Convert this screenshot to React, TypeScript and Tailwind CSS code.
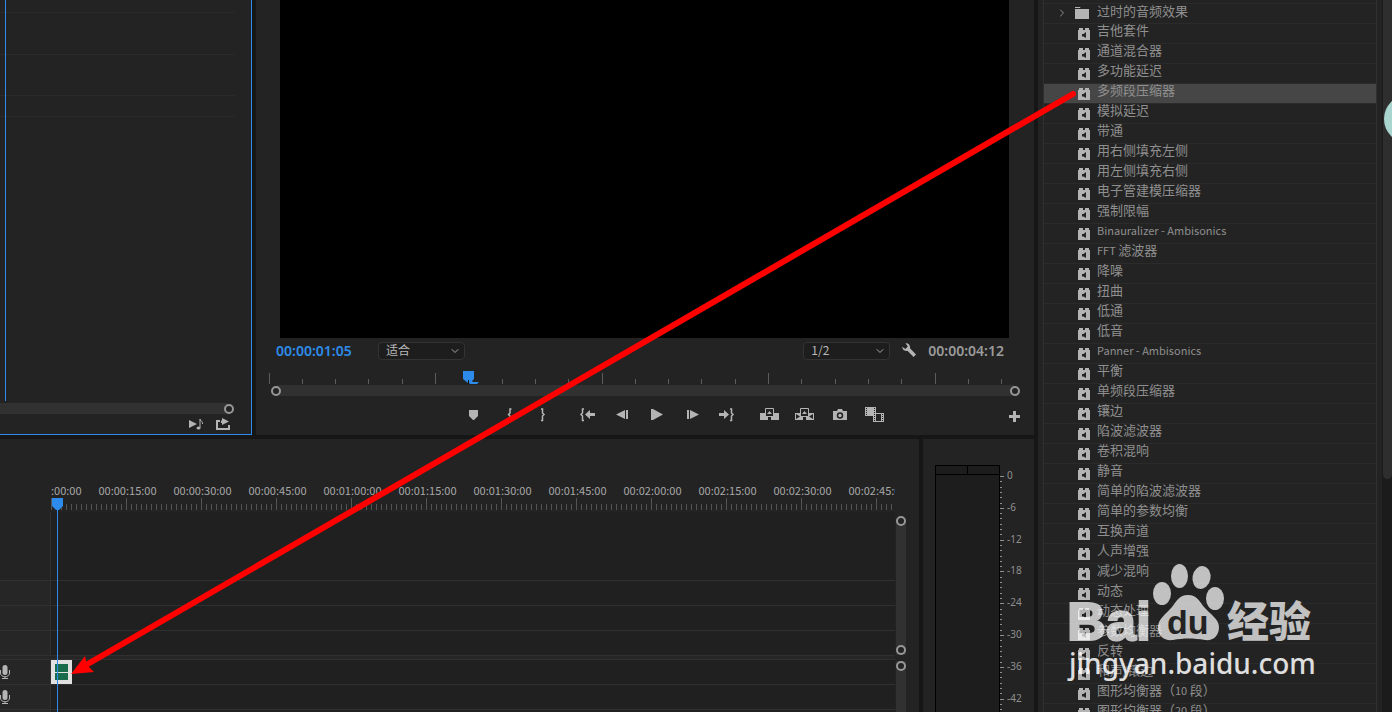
import type { ReactNode } from 'react';
import { ChevronDown, ChevronRight } from 'lucide-react';

const EFFECTS = [
  '吉他套件',
  '通道混合器',
  '多功能延迟',
  '多频段压缩器',
  '模拟延迟',
  '带通',
  '用右侧填充左侧',
  '用左侧填充右侧',
  '电子管建模压缩器',
  '强制限幅',
  'Binauralizer - Ambisonics',
  'FFT 滤波器',
  '降噪',
  '扭曲',
  '低通',
  '低音',
  'Panner - Ambisonics',
  '平衡',
  '单频段压缩器',
  '镶边',
  '陷波滤波器',
  '卷积混响',
  '静音',
  '简单的陷波滤波器',
  '简单的参数均衡',
  '互换声道',
  '人声增强',
  '减少混响',
  '动态',
  '动态处理',
  '参数均衡器',
  '反转',
  '和声/镶边',
  '图形均衡器（10 段）',
  '图形均衡器（20 段）',
];

const SELECTED = '多频段压缩器';

const RULER = [
  '00:00:00:00',
  '00:00:15:00',
  '00:00:30:00',
  '00:00:45:00',
  '00:01:00:00',
  '00:01:15:00',
  '00:01:30:00',
  '00:01:45:00',
  '00:02:00:00',
  '00:02:15:00',
  '00:02:30:00',
  '00:02:45:00',
];

const DB_MARKS = ['0', '-6', '-12', '-18', '-24', '-30', '-36', '-42'];

// Latin runs are set smaller than the Chinese text around them
function EffectName({ name }: { name: string }) {
  return (
    <span className="whitespace-nowrap text-[13px] leading-[13px]">
      {name.split(/([A-Za-z0-9/ -]+)/).map((part, i) =>
        i % 2 === 1 ? (
          <span key={i} className="font-['Noto_Sans_CJK_SC',sans-serif] text-[11px]">{part}</span>
        ) : (
          part
        )
      )}
    </span>
  );
}

function EffectIcon() {
  return (
    <svg width="12" height="12" viewBox="0 0 12 12" className="mt-1 shrink-0">
      <path d="M0 2h1V0h4v2h2V0h4v2h1v10H0z" fill="#b4b4b4" />
      <path d="M4 6h1.500L8 4v6L5.500 8.500H4z" fill="#232323" />
    </svg>
  );
}

function Knob({ className = '' }: { className?: string }) {
  return (
    <span className={`relative block size-[10px] shrink-0 rounded-full border-2 border-[#979797] bg-[#232323] ${className}`} />
  );
}

function IconButton({ label, className = '', children }: { label: string; className?: string; children: ReactNode }) {
  return (
    <button type="button" aria-label={label} className={`flex h-4 w-[35px] shrink-0 items-center justify-center text-[#b4b4b4] ${className}`}>
      <svg width="20" height="16" viewBox="0 0 20 16" fill="currentColor">
        {children}
      </svg>
    </button>
  );
}

function Dropdown({ label, value }: { label: string; value: string }) {
  return (
    <label className="relative block w-[87px] shrink-0">
      <span className="sr-only">{label}</span>
      <select className="block h-[18px] w-full appearance-none rounded-sm border border-[#333] bg-[#1d1d1d] pb-[2px] pl-[7px] font-['Noto_Sans_CJK_SC',sans-serif] text-[12px] leading-[14px] text-[#b8b8b8]">
        <option>{value}</option>
      </select>
      <ChevronDown className="pointer-events-none absolute top-[3px] right-1 size-3 text-[#a8a8a8]" />
    </label>
  );
}

function SourcePanel() {
  return (
    <section className="relative flex w-[252px] shrink-0 flex-col border-r border-b border-[#2d8ceb] bg-[#232323]">
      <div className="relative mr-4 flex-1">
        <div className="h-[13px] border-b border-[#2b2b2b]" />
        <div className="h-[42px] border-b border-[#2b2b2b]" />
        <div className="h-[41px] border-b border-[#2b2b2b]" />
        <div className="h-[21px] border-b border-[#2b2b2b]" />
        <div className="absolute top-0 bottom-0.5 left-[5px] w-px bg-[#2d8ceb]" />
      </div>
      <div className="mr-[17px] flex h-[11px] items-center">
        <div className="h-full flex-1 bg-[#313131]" />
        <Knob className="-ml-1" />
      </div>
      <div className="flex h-5 items-center justify-end gap-3 pr-5 text-[#b4b4b4]">
        <button type="button" aria-label="Play audio">
          <svg width="15" height="12" viewBox="0 0 15 12" fill="currentColor">
            <path d="M0 2l8 4-8 4z" />
            <ellipse cx="9.500" cy="10" rx="2" ry="1.500" />
            <path d="M11 10V1c.5 2 3 2.500 2.500 5" fill="none" stroke="currentColor" />
          </svg>
        </button>
        <button type="button" aria-label="Export">
          <svg width="15" height="12" viewBox="0 0 15 12" fill="currentColor">
            <path d="M0 2h4v2H2v6h10V7h2v5H0z" />
            <path d="M6 0l7 3.500L6 7V5H5V2.500h1z" />
          </svg>
        </button>
      </div>
    </section>
  );
}

function MonitorRuler() {
  return (
    <svg className="block h-[15px] w-full overflow-visible" aria-hidden="true">
      {Array.from({ length: 23 }, (_, i) => (
        <rect key={i} x={Math.floor(13 + i * 33.3)} y={i % 5 === 0 ? 3 : 9} width="1" height={i % 5 === 0 ? 11 : 5} fill="#5c5c5c" />
      ))}
      <path d="M207 1h11v8l-4 4h-2l-5-4z" fill="#2d8ceb" />
      <path d="M213 13v-1l3-1 1 1h6l-2 2h-7z" fill="#2d8ceb" />
      <rect x="212" y="10" width="1" height="4" fill="#111" />
    </svg>
  );
}

function ProgramPanel() {
  return (
    <section className="flex min-w-0 flex-1 flex-col bg-[#232323]">
      <div className="mr-[25px] ml-6 flex-1 bg-black" />
      <div className="flex h-8 items-start pt-1 pr-[30px] pl-5">
        <span className="w-[102px] text-[14px] leading-[18px] font-semibold text-[#2d8ceb]">00:00:01:05</span>
        <Dropdown label="Zoom level" value="适合" />
        <span className="flex-1" />
        <Dropdown label="Playback resolution" value="1/2" />
        <button type="button" aria-label="Settings" className="mt-px ml-3 text-[#b4b4b4]">
          <svg width="14" height="14" viewBox="0 0 14 14" fill="currentColor">
            <path d="M3.500.3C6 0 8.500 2 8 5.200L14 11.600 11.600 14 5.400 7.800C2.500 8.600.2 6.500.3 3.800L3.300 6 5.800 3.600z" />
          </svg>
        </button>
        <span className="ml-3 text-[14px] leading-[18px] font-semibold text-[#9b9b9b]">00:00:04:12</span>
      </div>
      <MonitorRuler />
      <div className="flex h-[11px] items-center pr-[14px] pl-[15px]">
        <Knob />
        <div className="-mx-1 h-full flex-1 bg-[#313131]" />
        <Knob />
      </div>
      <div className="flex h-[39px] items-start pt-[11px] pr-[2px]">
        <div className="flex flex-1 justify-center pl-24">
          <IconButton label="Add marker">
            <path d="M5 3h9v6l-4 4h-1l-4-4z" />
          </IconButton>
          <IconButton label="Mark in">
            <path d="M12.500 2H11v4L9.500 7.500 11 9v4.500h1.500" fill="none" stroke="currentColor" strokeWidth="1.500" />
          </IconButton>
          <IconButton label="Mark out">
            <path d="M7 2h1.500v4L10 7.500 8.500 9v4.500H7" fill="none" stroke="currentColor" strokeWidth="1.500" />
          </IconButton>
          <IconButton label="Go to in" className="ml-[9px]">
            <path d="M6 2H4.500v4L3 7.500 4.500 9v4.500H6" fill="none" stroke="currentColor" strokeWidth="1.500" />
            <path d="M7 7.500L12 3v3h5v3h-5v3z" />
          </IconButton>
          <IconButton label="Step back">
            <path d="M3 7.500L12 3v9zM13 3h2v9h-2z" />
          </IconButton>
          <IconButton label="Play">
            <path d="M3 2h2l10 5.500L5 13H3z" />
          </IconButton>
          <IconButton label="Step forward">
            <path d="M16 7.500L7 3v9zM4 3h2v9H4z" />
          </IconButton>
          <IconButton label="Go to out">
            <path d="M11 7.500L6 3v3H1v3h5v3z" />
            <path d="M12 2h1.500v4L15 7.500 13.500 9v4.500H12" fill="none" stroke="currentColor" strokeWidth="1.500" />
          </IconButton>
          <IconButton label="Lift" className="ml-[7px]">
            <path d="M0 6h8v7H0zM12 6h7v7h-7z" />
            <path d="M5.500 1.500h8v8h-8z" fill="#232323" stroke="currentColor" />
            <path d="M9.500 4L12 7H7zM5 9h3v4H5zM11 9h3v4h-3z" />
          </IconButton>
          <IconButton label="Extract">
            <path d="M0 6h8v7H0zM12 6h7v7h-7z" />
            <path d="M5.500 1.500h8v8h-8z" fill="#232323" stroke="currentColor" />
            <path d="M9.500 4L12 7H7zM5 9h3v4H5zM11 9h3v4h-3z" />
            <path d="M1 7l4 2.500L1 12zM18 7l-4 2.500L18 12z" fill="#232323" />
          </IconButton>
          <IconButton label="Export frame">
            <path d="M3 4h4l1-2h4l1 2h4v9H3z" />
            <circle cx="10" cy="8.500" r="2.500" fill="none" stroke="#232323" strokeWidth="1.500" />
          </IconButton>
          <IconButton label="Comparison view">
            <path d="M0 0h11v9H0z" />
            <path d="M1.500 1v8M9.500 1v8" stroke="#232323" strokeDasharray="1 1" />
            <path d="M8 6h11v9H8z" />
            <path d="M11 7h5v7h-5z" fill="#232323" />
            <path d="M9.500 7v8M17.500 7v8" stroke="#232323" strokeDasharray="1 1" />
          </IconButton>
        </div>
        <IconButton label="Button editor">
          <path d="M8 4h3v4h4v3h-4v4H8v-4H4V8h4z" />
        </IconButton>
      </div>
    </section>
  );
}

function MicIcon() {
  return (
    <svg width="10" height="16" viewBox="0 0 10 16" className="text-[#b4b4b4]">
      <rect x="2.500" y="1" width="5" height="10" rx="2.500" fill="currentColor" />
      <path d="M.5 6v3c0 5 9 5 9 0V6M5 13v2M2 14.500h6" fill="none" stroke="currentColor" />
    </svg>
  );
}

function Track({ clip = false, audio = false }: { clip?: boolean; audio?: boolean }) {
  return (
    <div className="flex h-[25px] shrink-0 border-b border-[#303030]">
      <div className="flex w-[51px] shrink-0 items-center border-r border-[#303030] bg-[#262626]">
        {audio && (
          <button type="button" aria-label="Record voice-over">
            <MicIcon />
          </button>
        )}
      </div>
      <div className="flex-1 bg-[#202020]">
        {clip && (
          <div className="flex h-6 w-[21px] items-center justify-center bg-[#e0e0e0]">
            <div className="flex h-4 w-[13px] flex-col gap-px">
              <div className="flex-1 bg-[#186b4b]" />
              <div className="flex-1 bg-[#186b4b]" />
            </div>
          </div>
        )}
      </div>
    </div>
  );
}

function Timeline() {
  return (
    <section className="relative flex min-w-0 flex-1 overflow-hidden bg-[#232323]">
      <div className="flex min-w-0 flex-1 flex-col pt-[43px]">
        <div className="ml-[51px] shrink-0 overflow-hidden">
          <div className="-ml-9 flex font-['Noto_Sans_CJK_SC',sans-serif] text-[11px] leading-4 text-[#a8a8a8]">
            {RULER.map(time => (
              <span key={time} className="w-[75px] shrink-0 text-center">{time}</span>
            ))}
          </div>
        </div>
        <svg className="ml-[51px] block h-[14px] w-[841px] shrink-0" aria-hidden="true">
          {Array.from({ length: 169 }, (_, i) => (
            <rect key={i} x={i * 5} y={i % 15 === 0 ? 0 : 6} width="1" height={i % 15 === 0 ? 12 : 6} fill="#555" />
          ))}
          <path d="M1 0h11v8l-4 4H5L1 8z" fill="#2d8ceb" />
        </svg>
        <div className="flex h-[69px] shrink-0 border-b border-[#303030]">
          <div className="w-[51px] shrink-0 border-r border-[#303030] bg-[#232323]" />
          <div className="flex-1 bg-[#202020]" />
        </div>
        <Track />
        <Track />
        <Track />
        <div className="h-1 shrink-0 border-b border-[#303030] bg-[#262626]" />
        <Track clip audio />
        <Track audio />
        <Track />
      </div>
      <div className="flex w-6 shrink-0 flex-col pt-[77px] pl-px">
        <div className="flex h-[139px] w-[10px] shrink-0 flex-col justify-between rounded-t-full bg-[#313131]">
          <Knob />
          <Knob />
        </div>
        <div className="mt-[6px] w-[10px] flex-1 bg-[#313131]">
          <Knob />
        </div>
      </div>
      <div className="absolute top-[69px] bottom-0 left-[57px] w-px bg-[#2d8ceb]" />
    </section>
  );
}

function AudioMeters() {
  return (
    <section className="w-[111px] shrink-0 overflow-hidden bg-[#232323]">
      <svg className="block h-full w-full" aria-label="Audio meters">
        <rect x="12.500" y="26.500" width="64" height="400" fill="#1d1d1d" stroke="#000" />
        <path d="M12.500 35.500h64M44.500 26.500v9" stroke="#000" fill="none" />
        {Array.from({ length: 46 }, (_, i) => (
          <rect key={i} x="77" y={Math.round(37 + i * 5.3)} width={i % 6 === 0 ? 4 : 2} height="1" fill="#8f8f8f" />
        ))}
        {DB_MARKS.map((mark, i) => (
          <text key={mark} x="84" y={Math.round(40 + i * 31.8)} fontSize="10" fill="#8f8f8f">
            {mark}
          </text>
        ))}
      </svg>
    </section>
  );
}

function EffectsPanel() {
  return (
    <section className="relative flex w-[354px] shrink-0 overflow-hidden bg-[#232323] pl-[5px]">
      <ul className="w-[334px] shrink-0 border-x border-[#303030] pt-[3px] text-[#8f8f8f]">
        <li className="flex h-[21px] items-start border-y border-[#2b2b2b] pt-px pl-3">
          <button type="button" aria-label="Expand" className="mt-0.5 mr-[7px]">
            <ChevronRight className="size-3" />
          </button>
          <svg width="14" height="12" viewBox="0 0 14 12" className="mt-0.5 mr-[8px]">
            <path d="M0 0h5l1 2h8v10H0z" fill="#b4b4b4" />
            <path d="M0 1.500h14" stroke="#232323" />
          </svg>
          <EffectName name="过时的音频效果" />
        </li>
        {EFFECTS.map(name => (
          <li key={name} className={`flex h-5 items-start gap-[7px] border-b border-[#2b2b2b] pl-[34px] ${name === SELECTED ? 'bg-[#464646]' : ''}`}>
            <EffectIcon />
            <EffectName name={name} />
          </li>
        ))}
      </ul>
      <div className="ml-[5px] flex-1 bg-[#1b1b1b] pl-px">
        <div className="h-[479px] rounded-b-full bg-[#2e2e2e]" />
      </div>
      <div className="absolute top-[95px] -right-10 size-12 rounded-full bg-[#a9d5cf]" />
    </section>
  );
}

function Watermark() {
  return (
    <svg width="260" height="124" viewBox="0 0 260 124" className="pointer-events-none absolute right-[70px] bottom-7" fill="#fff">
      <g opacity="0.720">
        <text x="5" y="80" fontFamily="Liberation Sans, sans-serif" fontWeight="700" fontSize="54" stroke="#fff" strokeWidth="2">Bai</text>
        <ellipse cx="100" cy="33.500" rx="9" ry="11.500" />
        <ellipse cx="117.500" cy="16" rx="8.500" ry="12" />
        <ellipse cx="139.500" cy="17.500" rx="9" ry="11.500" transform="rotate(10 139.500 17.500)" />
        <ellipse cx="153" cy="38.500" rx="9" ry="11.500" />
        <path d="M126 35c9 0 11 6 16 12 6 7 15 12 15 20 0 9-6 14-14 13-12-2-21-2-32 0-9 1-15-4-15-13 0-8 8-13 14-20 5-6 7-12 16-12z" />
        <text x="165" y="77" fontFamily="Noto Sans CJK SC, sans-serif" fontWeight="900" fontSize="42">经验</text>
      </g>
      <text x="105" y="74" fontFamily="Liberation Sans, sans-serif" fontWeight="700" fontSize="34" fill="#232323">du</text>
      <text x="7" y="114" fontFamily="Noto Sans, sans-serif" fontWeight="500" fontSize="28" opacity="0.850">jingyan.baidu.com</text>
    </svg>
  );
}

export default function App() {
  return (
    <main className="relative flex h-screen overflow-hidden bg-[#161616] font-['Noto_Sans','Noto_Sans_CJK_SC',sans-serif]">
      <div className="flex min-w-0 flex-1 flex-col gap-1">
        <div className="flex min-h-0 flex-1 gap-1">
          <SourcePanel />
          <ProgramPanel />
        </div>
        <div className="flex h-[273px] shrink-0 gap-1">
          <Timeline />
          <AudioMeters />
        </div>
      </div>
      <div className="ml-1 flex">
        <EffectsPanel />
      </div>
      <Watermark />
      <svg viewBox="0 0 1392 712" preserveAspectRatio="none" className="pointer-events-none absolute inset-0 h-full w-full" aria-hidden="true">
        <path d="M1073 94L86 665" stroke="#f00" strokeWidth="6" strokeLinecap="round" />
        <path d="M71 674l14-18 2 9 7 7z" fill="#f00" />
      </svg>
    </main>
  );
}
